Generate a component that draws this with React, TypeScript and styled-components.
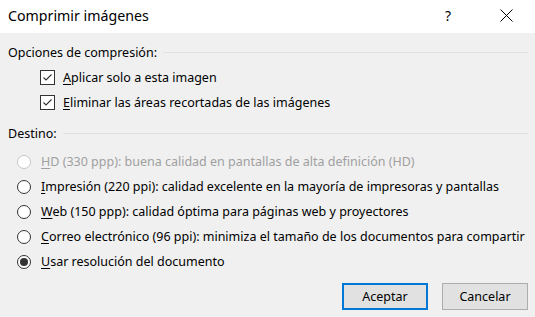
import styled, { createGlobalStyle } from "styled-components";

const GlobalStyle = createGlobalStyle`
  html, body {
    margin: 0;
    padding: 0;
    background: #f0f0f0;
  }
  body {
    font-family: "Noto Sans", "Liberation Sans", sans-serif;
  }
`;

const Dialog = styled.div`
  width: 535px;
  height: 317px;
  background: #f0f0f0;
  color: #000;
  font-size: 12.5px;
  display: flex;
  flex-direction: column;
  overflow: hidden;
`;

const TitleBar = styled.div`
  height: 33px;
  background: #fff;
  display: flex;
  align-items: center;
  padding: 0 6px 2px 8px;
  box-sizing: border-box;
  gap: 12px;
`;

const Title = styled.div`
  flex: 1;
  font-size: 14.2px;
`;

const TitleButton = styled.div`
  width: 46px;
  height: 31px;
  display: flex;
  align-items: center;
  justify-content: center;
  font-size: 14px;
  color: #000;
`;

const Body = styled.div`
  flex: 1;
  display: flex;
  flex-direction: column;
  padding: 0 7px 0 8px;
`;

const GroupHeader = styled.div<{ $top: number }>`
  height: 25px;
  margin-top: ${(p) => p.$top}px;
  display: flex;
  align-items: center;
  gap: 6px;

  &::after {
    content: "";
    flex: 1;
    height: 1px;
    background: #e0e0e0;
  }
`;

const OptionList = styled.div<{ $indent: number; $top: number }>`
  display: flex;
  flex-direction: column;
  padding-left: ${(p) => p.$indent}px;
  margin-top: ${(p) => p.$top}px;
`;

const Row = styled.label<{ $gap: number; $disabled?: boolean }>`
  height: 25px;
  display: flex;
  align-items: center;
  gap: ${(p) => p.$gap}px;
  white-space: nowrap;
  color: ${(p) => (p.$disabled ? "#a0a0a0" : "#000")};
`;

const Box = styled.span`
  width: 13px;
  height: 13px;
  border: 1px solid #333;
  background: #fff;
  display: flex;
  align-items: center;
  justify-content: center;
  flex-shrink: 0;
`;

const Radio = styled.span<{ $disabled?: boolean }>`
  width: 12px;
  height: 12px;
  border: 1px solid ${(p) => (p.$disabled ? "#c6c6c6" : "#333")};
  border-radius: 50%;
  background: #fff;
  display: flex;
  align-items: center;
  justify-content: center;
  flex-shrink: 0;
`;

const Dot = styled.span`
  width: 8px;
  height: 8px;
  border-radius: 50%;
  background: #333;
`;

const Key = styled.u`
  text-underline-offset: 2px;
`;

const Footer = styled.div`
  display: flex;
  justify-content: flex-end;
  gap: 14px;
  margin-top: 9px;
`;

const Button = styled.button<{ $primary?: boolean }>`
  width: 86px;
  height: 27px;
  box-sizing: border-box;
  font: inherit;
  color: #000;
  background: #e1e1e1;
  border: ${(p) => (p.$primary ? "2px solid #0078d7" : "1px solid #adadad")};
  padding: 0;
`;

function CheckMark() {
  return (
    <svg width="11" height="11" viewBox="0 0 11 11">
      <polyline points="1.5,5.5 4,8 9.5,2.5" fill="none" stroke="#333" strokeWidth="1.1" />
    </svg>
  );
}

function CloseIcon() {
  return (
    <svg width="13" height="13" viewBox="0 0 13 13">
      <path d="M0.5 0.5 L12.5 12.5 M12.5 0.5 L0.5 12.5" stroke="#000" strokeWidth="1" />
    </svg>
  );
}

const destinations = [
  { key: "H", rest: "D (330 ppp): buena calidad en pantallas de alta definición (HD)", disabled: true },
  { key: "I", rest: "mpresión (220 ppi): calidad excelente en la mayoría de impresoras y pantallas" },
  { key: "W", rest: "eb (150 ppp): calidad óptima para páginas web y proyectores" },
  { key: "C", rest: "orreo electrónico (96 ppi): minimiza el tamaño de los documentos para compartir" },
  { key: "U", rest: "sar resolución del documento", checked: true },
];

export default function App() {
  return (
    <>
      <GlobalStyle />
      <Dialog>
        <TitleBar>
          <Title>Comprimir imágenes</Title>
          <TitleButton>?</TitleButton>
          <TitleButton>
            <CloseIcon />
          </TitleButton>
        </TitleBar>
        <Body>
          <GroupHeader $top={7}>Opciones de compresión:</GroupHeader>
          <OptionList $indent={32} $top={0}>
            <Row $gap={8}>
              <Box>
                <CheckMark />
              </Box>
              <span>
                <Key>A</Key>plicar solo a esta imagen
              </span>
            </Row>
            <Row $gap={8}>
              <Box>
                <CheckMark />
              </Box>
              <span>
                <Key>E</Key>liminar las áreas recortadas de las imágenes
              </span>
            </Row>
          </OptionList>
          <GroupHeader $top={6}>Destino:</GroupHeader>
          <OptionList $indent={9} $top={3}>
            {destinations.map((d) => (
              <Row key={d.key} $gap={10} $disabled={d.disabled}>
                <Radio $disabled={d.disabled}>{d.checked && <Dot />}</Radio>
                <span>
                  <Key>{d.key}</Key>
                  {d.rest}
                </span>
              </Row>
            ))}
          </OptionList>
          <Footer>
            <Button $primary>Aceptar</Button>
            <Button>Cancelar</Button>
          </Footer>
        </Body>
      </Dialog>
    </>
  );
}
